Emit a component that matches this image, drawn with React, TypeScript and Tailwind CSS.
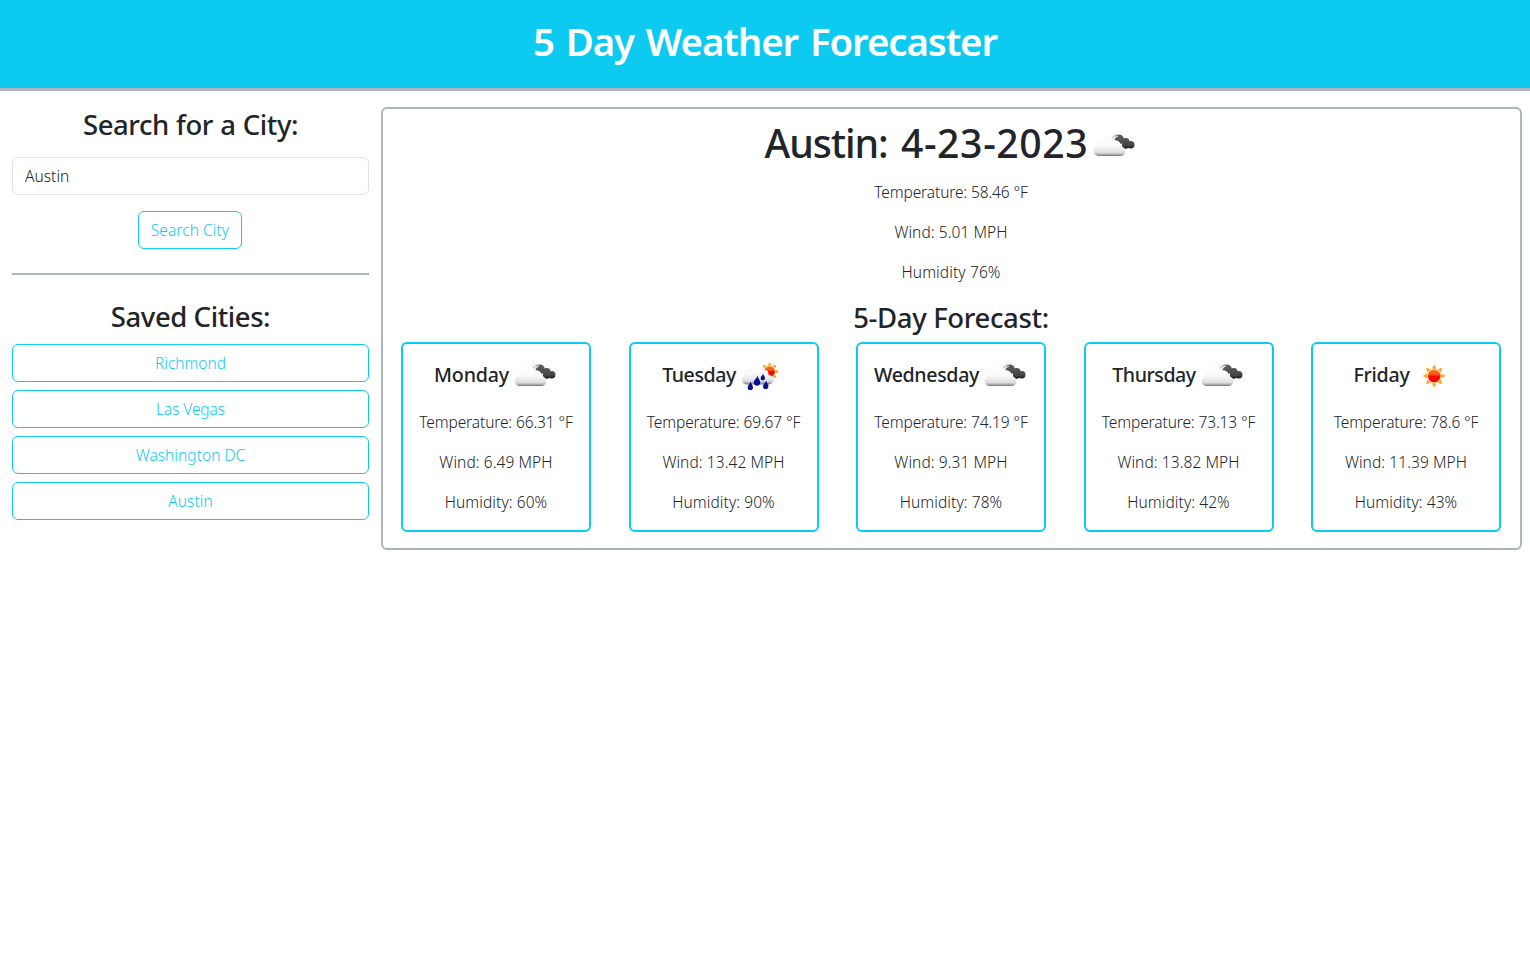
import { useId } from "react";

type IconName = "clouds" | "rain" | "sun";
type Lobe = [number, number, number];

const whiteLobes: Lobe[] = [
  [10, 31.2, 4.7],
  [13.5, 27, 4.8],
  [20.2, 22.8, 5.6],
  [20, 28.5, 7.4],
  [27.8, 25.4, 3.9],
  [32, 31.3, 4.7],
];

const darkLobes: Lobe[] = [
  [30.6, 19.4, 4.8],
  [37.2, 21.8, 3.9],
  [37, 25.2, 3.6],
  [42.2, 24.8, 3.8],
];

function SunShape({ cx, cy, r, id }: { cx: number; cy: number; r: number; id: string }) {
  const rays = [0, 45, 90, 135, 180, 225, 270, 315];
  return (
    <g transform={`translate(${cx} ${cy}) scale(${r / 6})`}>
      {rays.map((a) => (
        <path key={a} d="M-2.3 -7.2 L0 -11.5 L2.3 -7.2 Z" fill="#fba51c" transform={`rotate(${a})`} />
      ))}
      <circle r="7" fill="#ffc56a" />
      <circle r="6.2" fill={`url(#${id})`} />
    </g>
  );
}

function WhiteCloud({ id }: { id: string }) {
  return (
    <>
      {whiteLobes.map(([x, y, r]) => (
        <circle key={x} cx={x} cy={y} r={r} fill="none" stroke="#dcdcdc" strokeWidth="0.5" />
      ))}
      {whiteLobes.map(([x, y, r]) => (
        <circle key={x} cx={x} cy={y} r={r} fill={`url(#${id})`} />
      ))}
      <rect x="10" y="28" width="22" height="8" fill={`url(#${id})`} />
    </>
  );
}

function WeatherIcon({ name }: { name: IconName }) {
  const id = useId().replace(/[^a-zA-Z0-9]/g, "");
  return (
    <svg width="50" height="50" viewBox="0 0 50 50" className="block shrink-0">
      <defs>
        <linearGradient id={`c${id}`} gradientUnits="userSpaceOnUse" x1="0" y1="17" x2="0" y2="36">
          <stop offset="0" stopColor="#ffffff" />
          <stop offset="0.45" stopColor="#fafafa" />
          <stop offset="0.82" stopColor="#dedede" />
          <stop offset="0.93" stopColor="#a8a8a8" />
          <stop offset="1" stopColor="#6a6a6a" />
        </linearGradient>
        <linearGradient id={`d${id}`} gradientUnits="userSpaceOnUse" x1="0" y1="14" x2="0" y2="29">
          <stop offset="0" stopColor="#606060" />
          <stop offset="0.75" stopColor="#454545" />
          <stop offset="1" stopColor="#111111" />
        </linearGradient>
        <linearGradient id={`s${id}`} x1="0" y1="0" x2="0" y2="1">
          <stop offset="0" stopColor="#ff7a1a" />
          <stop offset="0.42" stopColor="#fb4a1c" />
          <stop offset="0.5" stopColor="#ff0800" />
          <stop offset="1" stopColor="#f50000" />
        </linearGradient>
      </defs>
      {name === "clouds" && (
        <g transform="translate(0.5 0)">
          {darkLobes.map(([x, y, r]) => (
            <circle key={x} cx={x} cy={y} r={r} fill={`url(#d${id})`} />
          ))}
          <path d="M22.8 20.5 C24 16.6 26 15 28.6 14.9" fill="none" stroke="#888888" strokeWidth="0.8" />
          <path d="M24.6 22 C25.2 18.6 26.8 16.8 29.4 16" fill="none" stroke="#f4f4f4" strokeWidth="1.1" />
          <path d="M25 20.4 C29 19.6 32.6 22.2 32.3 26.8 L28 29 Z" fill="#ffffff" />
          <WhiteCloud id={`c${id}`} />
        </g>
      )}
      {name === "rain" && (
        <>
          <SunShape cx={33.6} cy={21.5} r={5} id={`s${id}`} />
          <g transform="translate(0.6 -1.6)">
            <WhiteCloud id={`c${id}`} />
          </g>
          {[
            { x: 14.3, y: 31.4, s: 1 },
            { x: 21, y: 25.4, s: 1.2 },
            { x: 26.8, y: 23.4, s: 0.8 },
            { x: 29.7, y: 30.4, s: 1 },
          ].map((d) => (
            <path
              key={d.x}
              d="M0.4 0 C0.8 2.4 2.7 3.6 2.7 6 C2.7 7.7 1.5 8.7 0 8.7 C-1.6 8.7 -2.7 7.6 -2.7 6 C-2.7 3.7 -0.1 2.6 0.4 0 Z"
              transform={`translate(${d.x} ${d.y}) scale(${d.s})`}
              fill="#07108f"
            />
          ))}
        </>
      )}
      {name === "sun" && <SunShape cx={24.2} cy={26} r={6} id={`s${id}`} />}
    </svg>
  );
}

const cities = [
  { name: "Richmond", tracking: "tracking-[0px]" },
  { name: "Las Vegas", tracking: "tracking-[-0.1px]" },
  { name: "Washington DC", tracking: "tracking-[0.05px]" },
  { name: "Austin", tracking: "tracking-[0.05px]" },
];

const days: { day: string; tracking: string; icon: IconName; temp: string; wind: string; humidity: string }[] = [
  { day: "Monday", tracking: "tracking-[-0.15px]", icon: "clouds", temp: "66.31", wind: "6.49", humidity: "60" },
  { day: "Tuesday", tracking: "tracking-[-0.45px]", icon: "rain", temp: "69.67", wind: "13.42", humidity: "90" },
  { day: "Wednesday", tracking: "tracking-[-0.35px]", icon: "clouds", temp: "74.19", wind: "9.31", humidity: "78" },
  { day: "Thursday", tracking: "tracking-[-0.45px]", icon: "clouds", temp: "73.13", wind: "13.82", humidity: "42" },
  { day: "Friday", tracking: "tracking-[-0.25px]", icon: "sun", temp: "78.6", wind: "11.39", humidity: "43" },
];

export default function App() {
  return (
    <div className="min-h-screen bg-white font-['Noto_Sans',sans-serif] text-[15.5px] leading-6 font-light text-[#212529]">
      <header className="h-[91px] border-b-[3px] border-[#adb5bd] bg-[#0dcaf0] pt-[17px] text-center">
        <h1 className="text-[38.4px] leading-[48px] font-semibold tracking-[-1.1px] text-white [word-spacing:3px]">
          5 Day Weather Forecaster
        </h1>
      </header>

      <div className="flex pt-4 pr-2">
        <aside className="w-[381px] shrink-0 px-3 text-center">
          <h3 className="mb-[15px] pt-px text-[27.5px] leading-[34px] font-medium tracking-[-0.45px] [word-spacing:0.6px]">
            Search for a City:
          </h3>
          <input
            type="text"
            defaultValue="Austin"
            className="block h-[38px] w-full rounded-md border border-[#dee2e6] px-3 tracking-[0.05px] outline-none"
          />
          <button className="mt-4 mr-px h-[38px] w-[104px] rounded-md border border-[#0dcaf0] tracking-[0.08px] text-[#0dcaf0]">
            Search City
          </button>
          <hr className="mt-6 border-t-2 border-[#adb5bd]" />
          <h3 className="mt-[25px] mb-[10px] text-[27.5px] leading-[34px] font-medium tracking-[-0.42px]">Saved Cities:</h3>
          <div className="flex flex-col gap-2">
            {cities.map((c) => (
              <button key={c.name} className={`h-[38px] w-full rounded-md border border-[#0dcaf0] text-[#0dcaf0] ${c.tracking}`}>
                {c.name}
              </button>
            ))}
          </div>
        </aside>

        <main className="h-[443px] flex-1 rounded-md border-2 border-[#adb5bd] pr-[19px] pl-[18px] text-center">
          <div className="flex h-[71px] items-start justify-center pt-[10px] pl-px">
            <h1 className="text-[39.2px] leading-[48px] font-medium">
              <span className="tracking-[-1px] [word-spacing:4px]">Austin: </span>
              <span className="tracking-[0.6px]">4-23-2023</span>
            </h1>
            <div className="pt-px">
              <WeatherIcon name="clouds" />
            </div>
          </div>
          <p className="mb-4 tracking-[-0.12px]">Temperature: 58.46 °F</p>
          <p className="mb-4 tracking-[0.08px]">Wind: 5.01 MPH</p>
          <p className="mb-4 tracking-[0.12px]">Humidity 76%</p>
          <h3 className="mb-2 pt-px text-[27.5px] leading-[33px] font-medium tracking-[-0.35px]">5-Day Forecast:</h3>
          <div className="flex justify-between">
            {days.map((d) => (
              <section key={d.day} className="h-[190px] w-[190px] rounded-md border-2 border-[#0dcaf0]">
                <div className="flex h-[66px] items-start justify-center pt-[6px] pl-px">
                  <h5 className={`pt-[13px] text-[19.6px] leading-6 font-medium ${d.tracking}`}>{d.day}</h5>
                  <WeatherIcon name={d.icon} />
                </div>
                <p className="mb-4 tracking-[-0.12px]">Temperature: {d.temp} °F</p>
                <p className="mb-4 tracking-[0.08px]">Wind: {d.wind} MPH</p>
                <p className="tracking-[0.08px]">Humidity: {d.humidity}%</p>
              </section>
            ))}
          </div>
        </main>
      </div>
    </div>
  );
}
